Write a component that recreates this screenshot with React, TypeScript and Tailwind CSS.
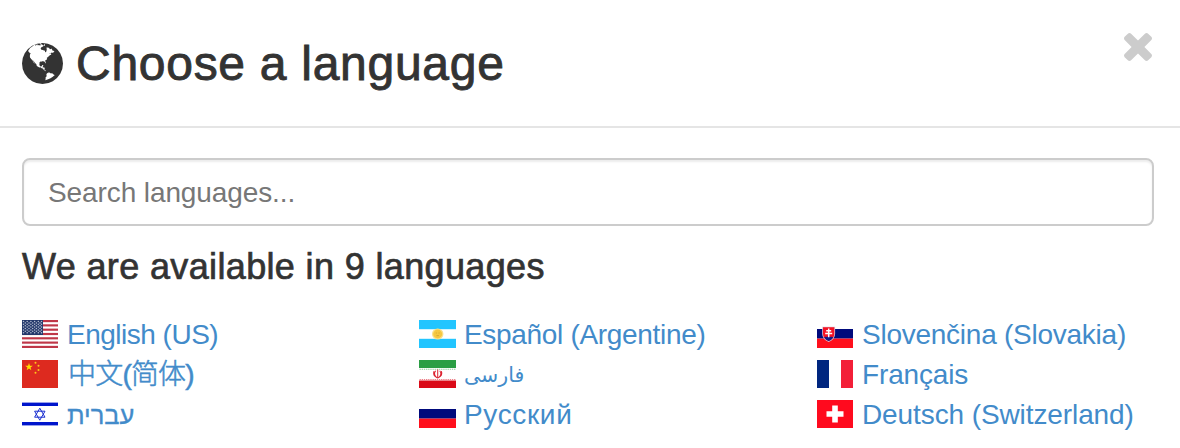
import React from "react";

const GLOBE =
  "M768 128q209 0 385.500 103t279.500 279.500 103 385.500-103 385.500-279.500 279.500-385.500 103-385.500-103-279.500-279.500-103-385.500 103-385.500 279.500-279.500 385.500-103zM1042 521q-2 1-9.500 9.500t-13.500 9.500q2 0 4.500-5t5-11 3.500-7q6-7 22-15 14-6 52-12 34-8 51 11-2-2 9.500-13t14.500-12q3-2 15-4.500t15-7.500l2-22q-12 1-17.500-7t-6.500-21q0 2-6 8 0-7-4.500-8t-11.500 1-9 1q-10-3-15-7.500t-8-16.500-4-15q-2-5-9.500-11t-9.500-10q-1-2-2.500-5.500t-3-6.500-4-5.500-5.500-2.500-7 5-7.500 10-4.500 5q-3-2-6-1.500t-4.500 1-4.500 3-5 3.500q-3 2-8.500 3t-8.500 2q15-5-1-11-10-4-16-3 9-4 7.500-12t-8.500-14h5q-1-4-8.500-8.500t-17.500-8.500-13-6q-8-5-34-9.500t-33-.5q-5 6-4.500 10.500t4 14 3.500 12.500q1 6-5.500 13t-6.500 12q0 7 14 15.500t10 21.500q-3 8-16 16t-16 12q-5 8-1.500 18.500t10.500 16.500q2 2 1.500 4t-3.500 4.500-5.500 4-6.500 3.500l-3 2q-11 5-20.500-6t-13.500-26q-7-25-16-30-23-8-29 1-5-13-41-26-25-9-58-4 6-1 0-15-7-15-19-12 3-6 4-17.500t1-13.500q3-13 12-23 1-1 7-8.500t9.500-13.500.5-6q35 4 50-11 5-5 11.500-17t10.500-17q9-6 14-5.500t14.500 5.500 14.500 5q14 1 15.500-11t-7.500-20q12 1 3-17-4-7-8-9-12-4-27 5-8 4 2 8-1-1-9.500 10.500t-16.500 17.500-16-5q-1-1-5.500-13.500t-9.500-13.500q-8 0-16 15 3-8-11-15t-24-8q19-12-8-27-7-4-20.500-5t-19.500 4q-5 7-5.500 11.500t5 8 10.500 5.500 11.500 4 8.500 3q14 10 8 14-2 1-8.500 3.500t-11.500 4.500-6 4q-3 4 0 14t-2 14q-5-5-9-17.500t-7-16.500q7 9-25 6l-10-1q-4 0-16 2t-20.500 1-13.500-8q-4-8 0-20 1-4 4-2-4-3-11-9.500t-10-8.500q-46 15-94 41 6 1 12-1 5-2 13-6.500t10-5.500q34-14 42-7l5-5q14 16 20 25-7-4-30-1-20 6-22 12 7 12 5 18-4-3-11.500-10t-14.500-11-15-5q-16 0-22 1-146 80-235 222 7 7 12 8 4 1 5 9t2.500 11 11.500-3q9 8 3 19 1-1 44 27 19 17 21 21 3 11-10 18-1-2-9-9t-9-4q-3 5 .5 18.500t10.500 12.500q-7 0-9.500 16t-2.500 35.500-1 23.500l2 1q-3 12 5.500 34.500t21.500 19.500q-13 3 20 43 6 8 8 9 3 2 12 7.500t15 10 10 10.500q4 5 10 22.500t14 23.500q-2 6 9.500 20t10.500 23q-1 0-2.500 1t-2.500 1q3 7 15.500 14t15.500 13q1 3 2 10t3 11 8 2q2-20-24-62-15-25-17-29-3-5-5.500-15.500t-4.500-14.500q2 0 6 1.500t8.500 3.500 7.500 4 2 3q-3 7 2 17.500t12 18.500 17 19 12 13q6 6 14 19.500t0 13.500q9 0 20 10t17 20q5 8 8 26t5 24q2 7 8.500 13.500t12.500 9.500l16 8 13 7q5 2 18.500 10.500t21.500 11.500q10 4 16 4t14.500-2.500 13.500-3.500q15-2 29 15t21 21q36 19 55 11-2 1 .5 7.500t8 15.500 9 14.500 5.500 8.500q5 6 18 15t18 15q6-4 7-9-3 8 7 20t18 10q14-3 14-32-31 15-49-18 0-1-2.500-5.500t-4-8.500-2.500-8.500 0-7.500 5-3q9 0 10-3.500t-2-12.500-4-13q-1-8-11-20t-12-15q-5 9-16 8t-16-9q0 1-1.500 5.500t-1.500 6.500q-13 0-15-1 1-3 2.500-17.500t3.500-22.500q1-4 5.500-12t7.500-14.500 4-12.500-4.500-9.500-17.500-2.500q-19 1-26 20-1 3-3 10.500t-5 11.500-9 7q-7 3-24 2t-24-5q-13-8-22.500-29t-9.500-37q0-10 2.500-26.500t3-25-5.500-24.500q3-2 9-9.500t10-10.500q2-1 4.500-1.500t4.500 0 4-1.500 3-6q-1-1-4-3-3-3-4-3 7 3 28.500-1.500t27.500 1.500q15 11 22-2 0-1-2.500-9.500t-.5-13.500q5 27 29 9 3 3 15.500 5t17.500 5q3 2 7 5.500t5.500 4.500 5-.5 8.500-6.500q10 14 12 24 11 40 19 44 7 3 11 2t4.500-9.500 0-14-1.500-12.500l-1-8v-18l-1-8q-15-3-18.500-12t1.500-18.500 15-18.500q1-1 8-3.500t15.500-6.500 12.500-8q21-19 15-35 7 0 11-9-1 0-5-3t-7.500-5-4.500-2q9-5 2-16 5-3 7.500-11t7.500-10q9 12 21 2 7-8 1-16 5-7 20.500-10.500t18.500-9.500q7 2 8-2t1-12 3-12q4-5 15-9t13-5l17-11q3-4 0-4 18 2 31-11 10-11-6-20 3-6-3-9.500t-15-5.500q3-1 11.500-.5t10.500-1.500q15-10-7-16-17-5-43 12zM879 1519q206-36 351-189-3-3-12.500-4.500t-12.500-3.500q-18-7-24-8 1-7-2.500-13t-8-9-12.500-8-11-7q-2-2-7-6t-7-5.500-7.500-4.500-8.500-2-10 1l-3 1q-3 1-5.500 2.500t-5.500 3-4 3 0 2.500q-21-17-36-22-5-1-11-5.500t-10.500-7-10-1.500-11.500 7q-5 5-6 15t-2 13q-7-5 0-17.500t2-18.500q-3-6-10.500-4.500t-12 4.500-11.500 8.500-9 6.500-8.500 5.500-8.500 7.500q-3 4-6 12t-5 11q-2-4-11.500-6.500t-9.500-5.500q2 10 4 35t5 38q7 31-12 48-27 25-29 40-4 22 12 26 0 7-8 20.500t-7 21.500q0 6 2 16z";

const TIMES =
  "M1298 1214q0 40-28 68l-136 136q-28 28-68 28t-68-28l-294-294-294 294q-28 28-68 28t-68-28l-136-136q-28-28-28-68t28-68l294-294-294-294q-28-28-28-68t28-68l136-136q28-28 68-28t68 28l294 294 294-294q28-28 68-28t68 28l136 136q28 28 28 68t-28 68l-294 294 294 294q28 28 28 68z";

function Flag({ wide, children }: { wide?: boolean; children: React.ReactNode }) {
  return (
    <svg
      viewBox="0 0 36 28"
      preserveAspectRatio="none"
      className={wide ? "-mr-px h-7 w-[37px] shrink-0" : "h-7 w-9 shrink-0"}
      aria-hidden="true"
    >
      {children}
    </svg>
  );
}

const STAR = "M0-4L.95-1.3 3.8-1.24 1.53.5 2.35 3.24 0 1.6-2.35 3.24-1.53.5-3.8-1.24-.95-1.3z";

const rows13 = Array.from({ length: 13 }, (_, i) => i);

const flags = {
  us: (
    <Flag>
      <rect width="36" height="28" fill="#fff" />
      {rows13.filter((i) => i % 2 === 0).map((i) => (
        <rect key={i} y={(i * 28) / 13} width="36" height={28 / 13} fill="#bf3748" />
      ))}
      <rect width="21" height="15" fill="#24386b" />
      {[1.5, 4.3, 7.1, 9.9, 12.7].map((y) =>
        [1.5, 5.2, 8.9, 12.6, 16.3, 19.5].map((x) => (
          <circle key={x + "-" + y} cx={x} cy={y} r=".75" fill="#b3bccf" />
        ))
      )}
      {[2.9, 5.7, 8.5, 11.3].map((y) =>
        [3.3, 7, 10.7, 14.4, 18].map((x) => (
          <circle key={x + "-" + y} cx={x} cy={y} r=".75" fill="#b3bccf" />
        ))
      )}
    </Flag>
  ),
  cn: (
    <Flag>
      <rect width="36" height="28" fill="#dd2a1f" />
      <path d={STAR} transform="translate(7 7)" fill="#ffde00" />
      <g fill="#ffc61a">
        <circle cx="13.5" cy="2.8" r="1" />
        <circle cx="16.5" cy="5.8" r="1" />
        <circle cx="16.5" cy="10" r="1" />
        <circle cx="13.5" cy="12.8" r="1" />
      </g>
    </Flag>
  ),
  il: (
    <Flag>
      <rect y="2.6" width="36" height="3.4" fill="#0015cc" />
      <rect y="22" width="36" height="3.4" fill="#0015cc" />
      <g fill="none" stroke="#1a2fd0" strokeWidth="1">
        <path d="M17.8 8.2L23 17.2H12.6z" />
        <path d="M17.8 20.2L23 11.2H12.6z" />
      </g>
    </Flag>
  ),
  ar: (
    <Flag wide>
      <rect width="36" height="9.2" fill="#22c5ff" />
      <rect y="18.8" width="36" height="9.2" fill="#22c5ff" />
      <circle cx="18.2" cy="14" r="5.6" fill="#fbe08a" />
      <circle cx="18.2" cy="14" r="4.4" fill="#f6c840" />
      <path d="M16.4 13h1M19 13h1M17 15.6h2.4" stroke="#c99a2e" strokeWidth=".7" />
    </Flag>
  ),
  ir: (
    <Flag wide>
      <rect width="36" height="8" fill="#2a9e44" />
      <rect y="20.5" width="36" height="7.5" fill="#da0a18" />
      <path d="M.5 9.2h36" stroke="#8ccb99" strokeWidth="1.1" strokeDasharray="1.3 .8" />
      <path d="M.5 19.5h36" stroke="#ec8088" strokeWidth="1.1" strokeDasharray="1.3 .8" />
      <g fill="none" stroke="#dc2230" strokeWidth="1">
        <path d="M18.2 9.6v8.8M16.2 10.7q-2.6 3.6.8 6.6M20.2 10.7q2.6 3.6-.8 6.6M14.6 11.2q-1.6 4.4 3 6.500M21.8 11.2q1.6 4.4-3 6.500" />
      </g>
    </Flag>
  ),
  ru: (
    <Flag wide>
      <rect y="9" width="36" height="9.6" fill="#000a7c" />
      <rect y="18.6" width="36" height="9.4" fill="#ff0f1c" />
    </Flag>
  ),
  sk: (
    <Flag>
      <rect y="9" width="36" height="9.6" fill="#000a7c" />
      <rect y="18.6" width="36" height="9.4" fill="#ff0f1c" />
      <path d="M5.2 6.8h12.9v7q0 5.600-6.400 8.100-6.500-2.500-6.500-8.100z" fill="#d9c6d4" />
      <path d="M6 7.2h11.300v6.600q0 5-5.600 7.200Q6 18.800 6 13.800z" fill="#f51225" />
      <path d="M7.100 17.600q1.500-1.600 3-.5 1.500-2 3.100 0 1.600-1.100 3.100.5-1.500 2.300-4.600 3.400-3.100-1.100-4.600-3.400z" fill="#10188a" />
      <path d="M11.700 8.500v8.700M9.200 10.700h5M8.200 13.500h7" stroke="#fff" strokeWidth="1.500" />
    </Flag>
  ),
  fr: (
    <Flag>
      <rect width="12" height="28" fill="#00267f" />
      <rect x="24" width="12" height="28" fill="#f31f38" />
    </Flag>
  ),
  ch: (
    <Flag>
      <rect width="36" height="28" fill="#ff0a1e" />
      <path d="M15.200 5.500h5.600v5.700h5.700v5.600h-5.700v5.700h-5.600v-5.700H9.500v-5.600h5.700z" fill="#fff" />
    </Flag>
  ),
};

type Entry = { flag: keyof typeof flags; name: string; style: string; dir?: "rtl" };

const languages: Entry[] = [
  { flag: "us", name: "English (US)", style: "tracking-[-0.5px]" },
  { flag: "ar", name: "Español (Argentine)", style: "tracking-[-0.32px]" },
  { flag: "sk", name: "Slovenčina (Slovakia)", style: "tracking-[-0.25px]" },
  { flag: "cn", name: "中文(简体)", style: "pl-px tracking-[-0.8px] [-webkit-text-stroke:0.5px_#428bca] font-light" },
  { flag: "ir", name: "فارسی", style: "text-[20.5px]", dir: "rtl" },
  { flag: "fr", name: "Français", style: "tracking-[-0.15px]" },
  { flag: "il", name: "עברית", style: "text-[25.5px] [-webkit-text-stroke:0.3px_#428bca]", dir: "rtl" },
  { flag: "ru", name: "Русский", style: "tracking-[0.65px]" },
  { flag: "ch", name: "Deutsch (Switzerland)", style: "tracking-[-0.1px]" },
];

export default function App() {
  return (
    <div className="h-[448px] overflow-hidden bg-white font-['Liberation_Sans','Noto_Sans_CJK_SC','DejaVu_Sans',sans-serif] text-[28px] leading-10 text-[#333]">
      <header className="flex h-32 items-start justify-between border-b-2 border-[#e5e5e5] pl-[22px] pr-7">
        <h2 className="flex h-[126px] items-center gap-[13px] text-[48px] leading-none">
          <svg viewBox="0 128 1536 1536" className="h-[41px] w-[41px]" fill="currentColor" aria-hidden="true">
            <path d={GLOBE} />
          </svg>
          <span className="whitespace-nowrap pt-0.5 tracking-[0.72px] [-webkit-text-stroke:0.9px_#333]">
            Choose a language
          </span>
        </h2>
        <button type="button" aria-label="Close" className="mt-[33px] text-[#ccc]">
          <svg viewBox="110 258 1188 1188" className="h-7 w-7" fill="currentColor">
            <path d={TIMES} />
          </svg>
        </button>
      </header>
      <main className="pl-[22px] pr-[26px] pt-[30px]">
        <input
          type="text"
          placeholder="Search languages..."
          className="block h-[68px] w-full rounded-lg border-2 border-[#ccc] bg-white px-6 pt-0.5 text-[28px] tracking-[-0.1px] shadow-[inset_0_2px_2px_rgba(0,0,0,0.075)] outline-none placeholder:text-[#777]"
        />
        <h4 className="mt-[21px] whitespace-nowrap text-[36px] leading-10 tracking-[0.36px] [-webkit-text-stroke:0.7px_#333]">
          We are available in 9 languages
        </h4>
        <ul className="mt-[27px] grid grid-cols-[397px_398px_1fr]">
          {languages.map((l) => (
            <li key={l.flag} className="h-10">
              <a href="#" className="flex h-10 items-center gap-[9px] whitespace-nowrap text-[#428bca]">
                {flags[l.flag]}
                <span dir={l.dir} className="flex h-10 items-center pt-0.5">
                  <span className={l.style}>{l.name}</span>
                </span>
              </a>
            </li>
          ))}
        </ul>
      </main>
    </div>
  );
}
